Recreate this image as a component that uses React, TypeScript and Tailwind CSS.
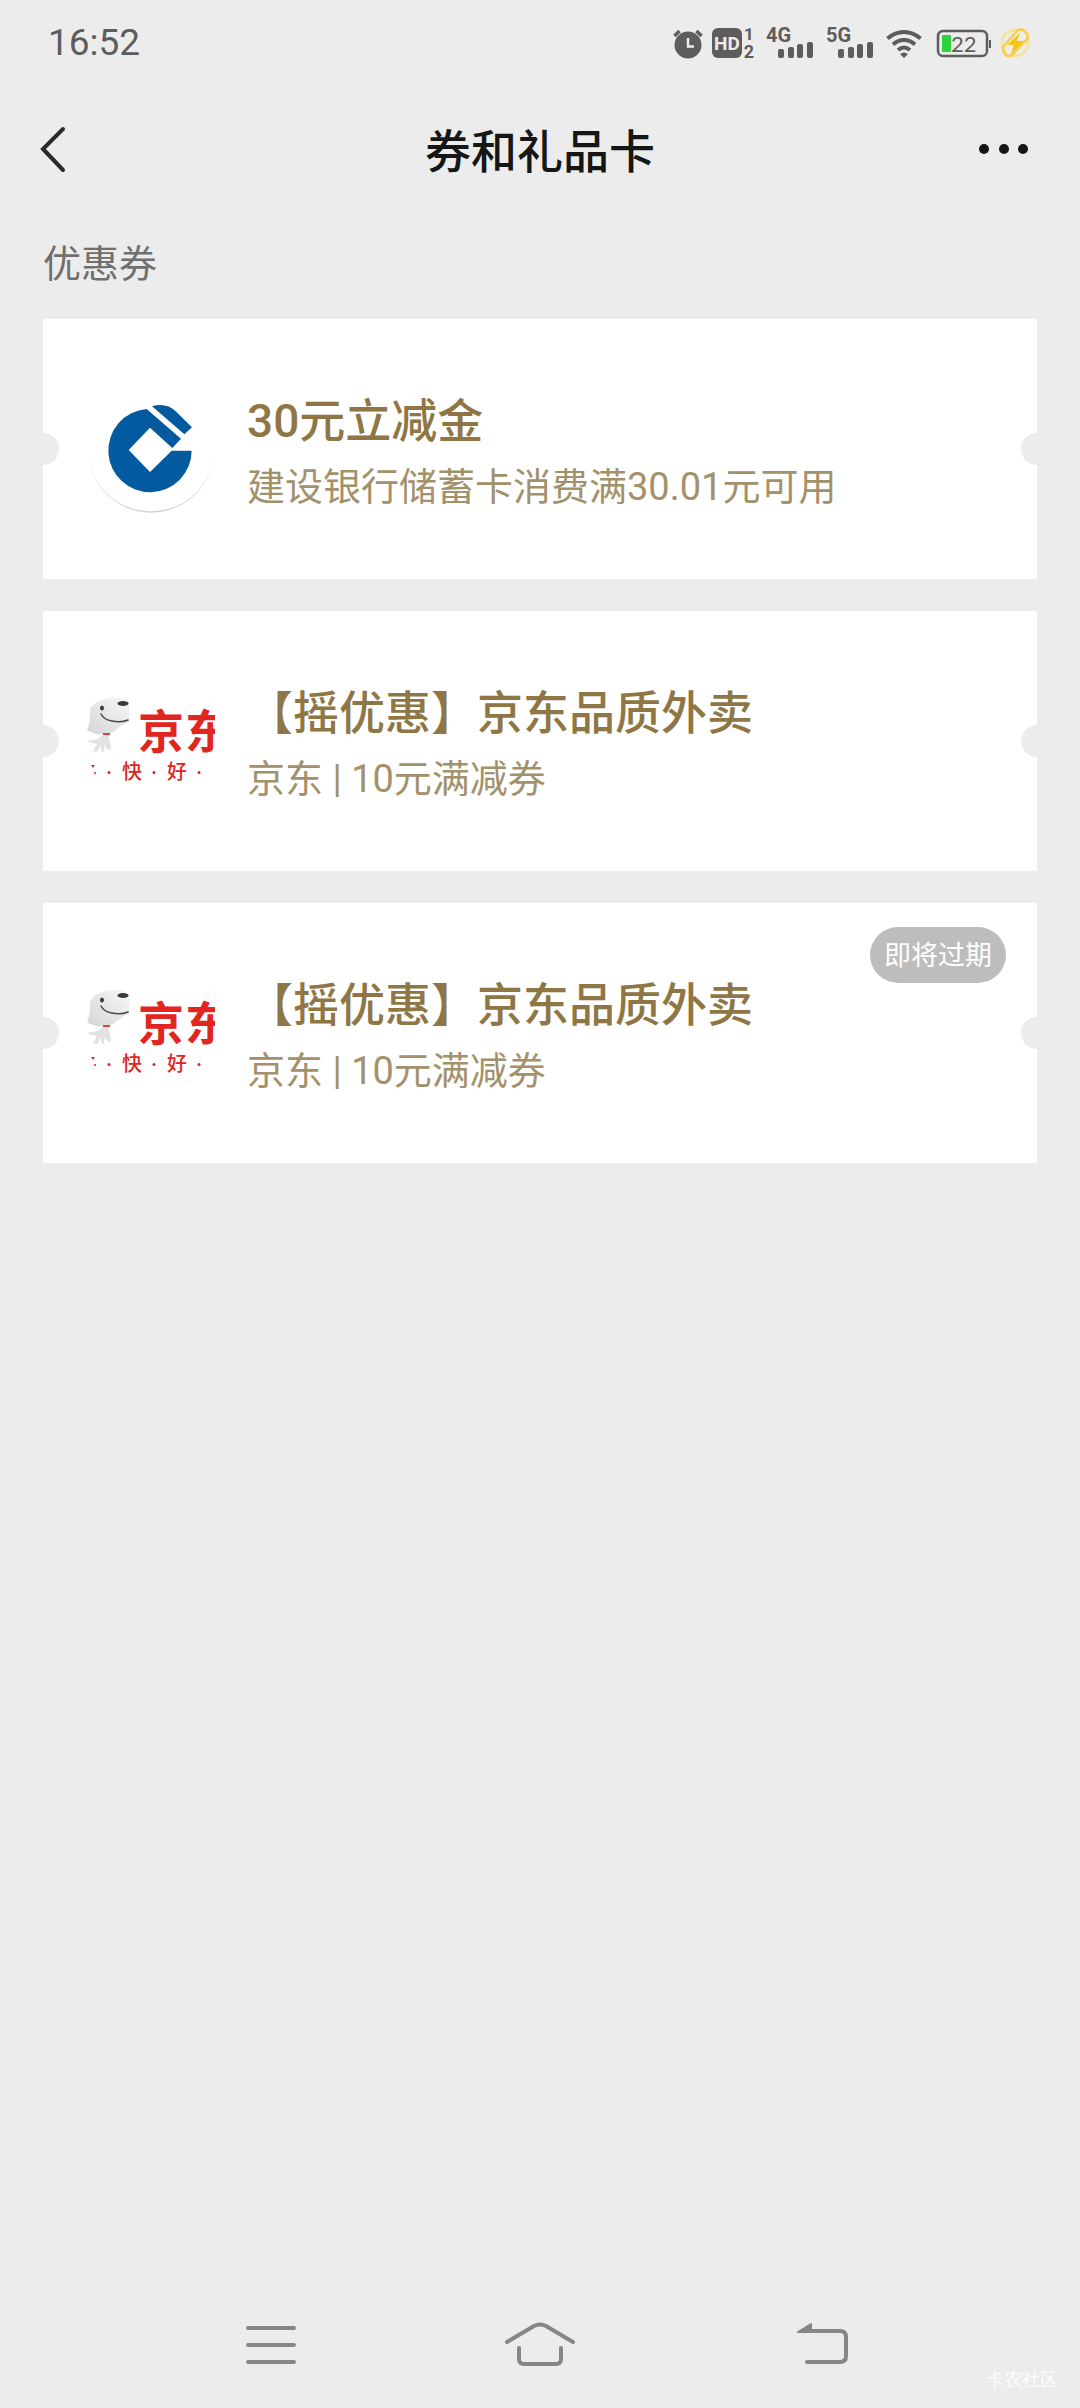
import type { ReactNode } from 'react';

interface Coupon {
  id: number;
  logo: 'ccb' | 'jd';
  title: string;
  desc: string;
  tag?: string;
}

const coupons: Coupon[] = [
  { id: 1, logo: 'ccb', title: '30元立减金', desc: '建设银行储蓄卡消费满30.01元可用' },
  { id: 2, logo: 'jd', title: '【摇优惠】京东品质外卖', desc: '京东 | 10元满减券' },
  { id: 3, logo: 'jd', title: '【摇优惠】京东品质外卖', desc: '京东 | 10元满减券', tag: '即将过期' },
];

function CcbLogo() {
  return (
    <svg className="w-32 h-32 shrink-0" viewBox="171 255 384 384" role="img" aria-label="建设银行">
      <defs>
        <linearGradient id="ring" x1="0" y1="0" x2="0" y2="1">
          <stop offset="0.4" stopColor="#d4d4d4" stopOpacity="0" />
          <stop offset="1" stopColor="#d4d4d4" />
        </linearGradient>
      </defs>
      <circle cx="363" cy="449" r="189" fill="url(#ring)" />
      <circle cx="363" cy="445" r="189" fill="#fff" />
      <g fill="#045a9f">
        <path d="M350 327L453 416L427 444L360 383L296 450L360 516L425 452H485A125 125 0 1 1 350 327Z" />
        <path d="M366 319Q408 307 437 334L486 382L463 403Z" />
      </g>
    </svg>
  );
}

function JdLogo() {
  return (
    <svg className="w-32 h-32 shrink-0" viewBox="0 0 128 128" role="img" aria-label="京东">
      <defs>
        <linearGradient id="dog" x1="1" y1="0" x2="0" y2="1">
          <stop offset="0" stopColor="#f8f8f8" />
          <stop offset="1" stopColor="#d4d5d7" />
        </linearGradient>
      </defs>
      <path d="M15 58H22Q21 61 23 65L24 73L20 72L18 67L17 75L14 74L14 68L10 75L6 74L10 67L1 65Q1 63 6 63Q13 62 15 58Z" fill="#e2e2e4" />
      <path d="M0 53Q3 47 3 38Q2 28 12 24Q22 20 32 21Q41 20 42 28L42 45Q34 48 29 53Q24 58 16 57Q7 58 0 53Z" fill="url(#dog)" />
      <ellipse cx="15" cy="31" rx="2" ry="2.5" fill="#3b3b3d" />
      <ellipse cx="36" cy="26.5" rx="5.5" ry="2.5" fill="#3b3b3d" />
      <path d="M14 37Q17 43 25 44Q34 46 41 43" fill="none" stroke="#4a4a4c" strokeWidth="1.6" strokeLinecap="round" />
      <path d="M16 57H23" stroke="#d8433c" strokeWidth="2" />
      <path d="M4 88L8 88L6 91Z" fill="#c63a35" />
      <g fill="#e0261f" className="font-['Noto_Sans_CJK_SC',sans-serif]">
        <circle cx="8" cy="96" r="1" />
        <circle cx="22" cy="95.5" r="1.5" />
        <circle cx="67" cy="95.5" r="1.5" />
        <circle cx="112" cy="95.5" r="1.5" />
        <text x="51" y="71" fontSize="46" fontWeight="700">京</text>
        <text x="98" y="71" fontSize="46" fontWeight="700">东</text>
        <text x="35" y="102" fontSize="20" fontWeight="500">快</text>
        <text x="80" y="102" fontSize="20" fontWeight="500">好</text>
      </g>
    </svg>
  );
}

function Signal({ label }: { label: string }) {
  return (
    <svg className="overflow-visible" width="48" height="32" viewBox="0 0 48 32" fill="#5d5d5d">
      <text x="0" y="15" fontSize="20" fontWeight="700" className="font-['Roboto',sans-serif]">{label}</text>
      <rect x="12" y="22" width="6" height="9" rx="2" />
      <rect x="22" y="20" width="6" height="11" rx="2" />
      <rect x="31" y="17" width="6" height="14" rx="2" />
      <rect x="41" y="15" width="6" height="16" rx="2" />
    </svg>
  );
}

function StatusBar() {
  return (
    <div className="h-[86px] pl-12 pr-12 flex items-center justify-between text-[#5d5d5d]">
      <span className="text-[37px] leading-[48px] font-['Roboto',sans-serif]">16:52</span>
      <div className="flex items-center">
        {/* alarm */}
        <svg width="30" height="32" viewBox="0 0 30 32">
          <circle cx="15" cy="18" r="13.5" fill="#5d5d5d" />
          <path d="M1.5 9L6.5 4M28.5 9L23.5 4" stroke="#5d5d5d" strokeWidth="3.5" />
          <path d="M15 11V19.5H21" fill="none" stroke="#ececec" strokeWidth="2.5" />
        </svg>
        {/* HD 1/2 */}
        <svg className="ml-[9px] overflow-visible" width="44" height="32" viewBox="0 0 44 32">
          <rect x="0" y="1" width="30" height="30" rx="6" fill="#5d5d5d" />
          <g className="font-['Roboto',sans-serif]" fontWeight="700">
            <text x="15" y="23" fontSize="19" textAnchor="middle" fill="#ececec">HD</text>
            <text x="37" y="13" fontSize="17" textAnchor="middle" fill="#5d5d5d">1</text>
            <text x="37" y="31" fontSize="18" textAnchor="middle" fill="#5d5d5d">2</text>
          </g>
        </svg>
        <div className="ml-[10px] flex gap-3">
          <Signal label="4G" />
          <Signal label="5G" />
        </div>
        {/* wifi */}
        <svg className="ml-3" width="36" height="32" viewBox="0 0 36 32" fill="none" stroke="#5d5d5d" strokeWidth="4">
          <path d="M1.5 11.5Q9 5 18 5Q27 5 34.5 11.5" />
          <path d="M7 17.5Q12 13 18 13Q24 13 29 17.5" />
          <path d="M12 23Q15 20.5 18 20.5Q21 20.5 24 23" />
          <path d="M14 27L18 31L22 27Q18 24 14 27Z" fill="#5d5d5d" stroke="none" />
        </svg>
        {/* battery */}
        <svg className="ml-[15px] overflow-visible" width="55" height="32" viewBox="0 0 55 32">
          <rect x="1" y="4" width="49" height="25" rx="5" fill="none" stroke="#5d5d5d" strokeWidth="2.5" />
          <rect x="52" y="13" width="2" height="8" fill="#5d5d5d" />
          <rect x="5" y="8" width="9" height="17" rx="1" fill="#2bd33f" />
          <text x="14" y="25" fontSize="22" fill="#5d5d5d" className="font-['Lato',sans-serif]">22</text>
        </svg>
        {/* charging */}
        <svg className="ml-2" width="32" height="32" viewBox="0 0 32 32">
          <circle cx="15" cy="16" r="13" fill="none" stroke="#f7e3a0" strokeWidth="3" />
          <path
            d="M3 20L16 5Q20 1 23 3Q28 6 28 11L14 26Q9 31 6 28Q3 25 3 20Z"
            fill="#ececec"
            stroke="#f6cf45"
            strokeWidth="2.5"
          />
          <path d="M20 6L7 18H14L11 27L24 14H17Z" fill="#f9c412" />
        </svg>
      </div>
    </div>
  );
}

function Header() {
  return (
    <header className="h-32 px-[38px] grid grid-cols-3 items-center">
      <button type="button" aria-label="返回" className="justify-self-start">
        <svg width="32" height="48" viewBox="0 0 32 48" fill="none" stroke="#2a2a2a" strokeWidth="4" strokeLinecap="round">
          <path d="M25 3L5 23L25 44" />
        </svg>
      </button>
      <h1 className="pt-1 text-center text-[46px] leading-[64px] font-medium text-[#161616] whitespace-nowrap">券和礼品卡</h1>
      <button type="button" aria-label="更多" className="justify-self-end">
        <svg width="66" height="48" viewBox="0 0 66 48" fill="#161616">
          <circle cx="8" cy="23" r="5" />
          <circle cx="28" cy="23" r="5" />
          <circle cx="47" cy="23" r="5" />
        </svg>
      </button>
    </header>
  );
}

function CouponCard({ coupon }: { coupon: Coupon }) {
  return (
    <li className="relative h-[260px] px-11 flex items-center gap-8 bg-white rounded-xs overflow-hidden">
      {/* ticket notches */}
      <span className="absolute -left-4 top-[114px] w-8 h-8 rounded-full bg-[#ececec]" />
      <span className="absolute -right-4 top-[114px] w-8 h-8 rounded-full bg-[#ececec]" />
      {coupon.logo === 'ccb' ? <CcbLogo /> : <JdLogo />}
      <div className="pt-1 flex flex-col gap-2">
        <h3 className="text-[46px] leading-[64px] font-medium text-[#8e7745]">{coupon.title}</h3>
        <p className="text-[38px] leading-[52px] text-[#a3916b]">{coupon.desc}</p>
      </div>
      {coupon.tag && (
        <span className="absolute right-[31px] top-6 h-14 px-[14px] pt-0.5 flex items-center rounded-full bg-[#bdbdbd] text-[27px] text-white">
          {coupon.tag}
        </span>
      )}
    </li>
  );
}

function NavButton({ label, children }: { label: string; children: ReactNode }) {
  return (
    <button type="button" aria-label={label} className="flex justify-center">
      {children}
    </button>
  );
}

function BottomNav() {
  return (
    <nav className="h-[126px] px-[136px] grid grid-cols-3 items-center">
      <NavButton label="最近任务">
        <svg width="52" height="48" viewBox="0 0 52 48" stroke="#868686" strokeWidth="4" strokeLinecap="round">
          <path d="M3 7H49M3 24H49M3 41H49" />
        </svg>
      </NavButton>
      <NavButton label="主页">
        <svg width="72" height="48" viewBox="0 0 72 48" fill="none" stroke="#868686" strokeWidth="4" strokeLinecap="round">
          <path d="M3 21L30 5Q36 2 42 5L69 21" />
          <path d="M15 27V38Q15 43 20 43H52Q57 43 57 38V27" />
        </svg>
      </NavButton>
      <NavButton label="返回上一级">
        <svg width="80" height="48" viewBox="0 0 80 48" fill="none" stroke="#868686" strokeWidth="4" strokeLinecap="round">
          <path d="M34 10H71Q77 10 77 16V35Q77 41 71 41H38" />
          <path d="M29 11L42 3V11Z" fill="#868686" strokeWidth="2" strokeLinejoin="round" />
        </svg>
      </NavButton>
    </nav>
  );
}

export default function App() {
  return (
    <div className="relative min-h-screen flex flex-col bg-[#ececec] font-['Roboto','Noto_Sans_CJK_SC',sans-serif]">
      <StatusBar />
      <Header />
      <main className="flex-1 px-[43px] pt-[26px]">
        <h2 className="text-[38px] leading-[48px] text-[#6f6f6f]">优惠券</h2>
        <ul className="mt-[31px] flex flex-col gap-8">
          {coupons.map((c) => (
            <CouponCard key={c.id} coupon={c} />
          ))}
        </ul>
      </main>
      <BottomNav />
      <span className="absolute right-[22px] bottom-4 text-[18px] leading-6 text-white/80">卡农社区</span>
    </div>
  );
}
